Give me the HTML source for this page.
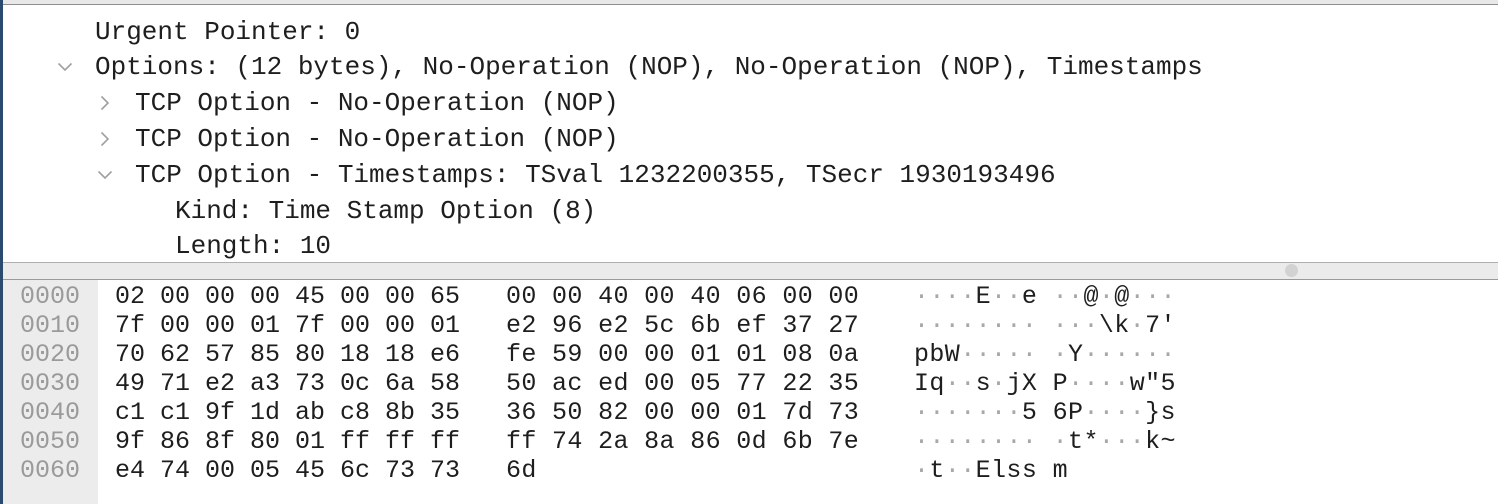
<!DOCTYPE html>
<html><head><meta charset="utf-8"><style>
body{margin:0;width:1498px;height:504px;overflow:hidden;background:#fff;position:relative;font-family:"Liberation Mono",monospace;color:#1e1e1e}
.t{position:absolute;font-size:26px;line-height:36px;white-space:pre}
.h{position:absolute;font-size:25px;line-height:29px;white-space:pre}
.o{color:#9a9a9a}
.d{color:#a8a8a8}
svg.a{position:absolute}
</style></head><body>
<div style="position:absolute;left:0;top:0;width:3px;height:504px;background:#2b4a6e"></div>
<div style="position:absolute;left:3px;top:0;right:0;height:4px;background:#e8e8e8;border-bottom:1px solid #8e8e8e"></div>
<div style="position:absolute;left:3px;top:262px;right:0;height:16px;background:#ebebeb;border-top:1px solid #b0b0b0;border-bottom:1px solid #9a9a9a"></div>
<div style="position:absolute;left:1285px;top:264px;width:13px;height:13px;border-radius:50%;background:#d2d2d2"></div>
<div style="position:absolute;left:3px;top:280px;width:95px;height:224px;background:#ececec"></div>

<div class="t" style="left:95px;top:14px">Urgent Pointer: 0</div>
<svg class="a" style="left:57px;top:62px" width="16" height="10"><path d="M1.5 1.5 L8 8 L14.5 1.5" fill="none" stroke="#a0a0a0" stroke-width="1.6"/></svg>
<div class="t" style="left:95px;top:49px">Options: (12 bytes), No-Operation (NOP), No-Operation (NOP), Timestamps</div>
<svg class="a" style="left:100px;top:95px" width="10" height="16"><path d="M1.5 1.5 L8 8 L1.5 14.5" fill="none" stroke="#a0a0a0" stroke-width="1.6"/></svg>
<div class="t" style="left:135px;top:85px">TCP Option - No-Operation (NOP)</div>
<svg class="a" style="left:100px;top:131px" width="10" height="16"><path d="M1.5 1.5 L8 8 L1.5 14.5" fill="none" stroke="#a0a0a0" stroke-width="1.6"/></svg>
<div class="t" style="left:135px;top:121px">TCP Option - No-Operation (NOP)</div>
<svg class="a" style="left:97px;top:170px" width="16" height="10"><path d="M1.5 1.5 L8 8 L14.5 1.5" fill="none" stroke="#a0a0a0" stroke-width="1.6"/></svg>
<div class="t" style="left:135px;top:157px">TCP Option - Timestamps: TSval 1232200355, TSecr 1930193496</div>
<div class="t" style="left:175px;top:193px">Kind: Time Stamp Option (8)</div>
<div class="t" style="left:175px;top:228px">Length: 10</div>

<div class="h o" style="left:20px;top:282px">0000
0010
0020
0030
0040
0050
0060</div>
<div class="h" style="left:115px;top:282px">02 00 00 00 45 00 00 65
7f 00 00 01 7f 00 00 01
70 62 57 85 80 18 18 e6
49 71 e2 a3 73 0c 6a 58
c1 c1 9f 1d ab c8 8b 35
9f 86 8f 80 01 ff ff ff
e4 74 00 05 45 6c 73 73</div>
<div class="h" style="left:506px;top:282px;letter-spacing:0.35px">00 00 40 00 40 06 00 00
e2 96 e2 5c 6b ef 37 27
fe 59 00 00 01 01 08 0a
50 ac ed 00 05 77 22 35
36 50 82 00 00 01 7d 73
ff 74 2a 8a 86 0d 6b 7e
6d</div>
<div class="h" style="left:914px;top:282px;letter-spacing:0.4px"><span class="d">····</span>E<span class="d">··</span>e <span class="d">··</span>@<span class="d">·</span>@<span class="d">···</span>
<span class="d">········</span> <span class="d">···</span>\k<span class="d">·</span>7'
pbW<span class="d">·····</span> <span class="d">·</span>Y<span class="d">······</span>
Iq<span class="d">··</span>s<span class="d">·</span>jX P<span class="d">····</span>w"5
<span class="d">·······</span>5 6P<span class="d">····</span>}s
<span class="d">········</span> <span class="d">·</span>t*<span class="d">···</span>k~
<span class="d">·</span>t<span class="d">··</span>Elss m</div>
</body></html>
